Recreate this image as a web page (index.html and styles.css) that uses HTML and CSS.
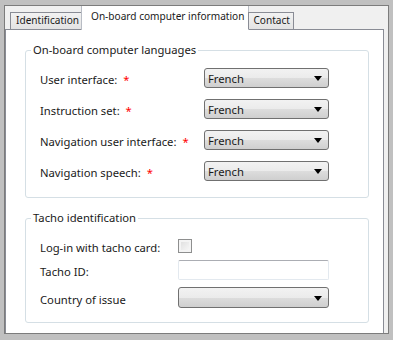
FILE: index.html
```html
<!DOCTYPE html>
<html lang="en">
  <head>
    <meta charset="UTF-8" />
    <title>On-board computer information</title>
    <link rel="stylesheet" href="styles.css">
  </head>
  <body>
    <div class="window">
      <div class="frame">
        <div class="tab-bar">
          <div class="tab first">Identification</div>
          <div class="tab active">On-board computer information</div>
          <div class="tab last">Contact</div>
        </div>

        <div class="pane">
          <fieldset class="group languages-group">
            <legend>On-board computer languages</legend>
            <div class="form-grid languages">
              <div class="label">User interface: <span class="req">*</span></div>
              <div class="select"><span>French</span><i class="arrow"></i></div>

              <div class="label">Instruction set: <span class="req">*</span></div>
              <div class="select"><span>French</span><i class="arrow"></i></div>

              <div class="label">Navigation user interface: <span class="req">*</span></div>
              <div class="select"><span>French</span><i class="arrow"></i></div>

              <div class="label">Navigation speech: <span class="req">*</span></div>
              <div class="select"><span>French</span><i class="arrow"></i></div>
            </div>
          </fieldset>

          <fieldset class="group">
            <legend>Tacho identification</legend>
            <div class="form-grid tacho">
              <div class="label">Log-in with tacho card:</div>
              <div class="control"><span class="checkbox"></span></div>

              <div class="label">Tacho ID:</div>
              <div class="input"></div>

              <div class="label shifted">Country of issue</div>
              <div class="select shifted"><span></span><i class="arrow"></i></div>
            </div>
          </fieldset>
        </div>
      </div>
    </div>
  </body>
</html>
```

FILE: styles.css
```css
:root {
  --frame-gray: #c0c0c0;
  --frame-line: #7c7c7c;
  --panel-bg: #f0f0f0;
  --tab-border: #898c95;
  --group-border: #d5dfe5;
  --text-color: #1a1a1a;
  --select-border: #707070;
}

* {
  margin: 0;
  padding: 0;
  box-sizing: border-box;
}

body {
  font-family: "Noto Sans", "DejaVu Sans", sans-serif;
  font-size: 11.25px;
  color: var(--text-color);
  background-color: white;
}

.window {
  width: 393px;
  height: 340px;
  border-style: solid;
  border-color: var(--frame-gray);
  border-width: 5px 4px 6px 4px;
}

.frame {
  height: 100%;
  border: 1px solid var(--frame-line);
  background-color: var(--panel-bg);
  padding-right: 4px;
  display: flex;
  flex-direction: column;
}

/* Tabs */
.tab-bar {
  display: flex;
  align-items: flex-end;
  height: 23px;
  padding-left: 5px;
  position: relative;
  z-index: 1;
}

.tab {
  height: 17px;
  line-height: 15px;
  font-size: 10.1px;
  border: 1px solid var(--tab-border);
  border-bottom: none;
  background: linear-gradient(#f2f2f2, #e3e3e3);
  white-space: nowrap;
}

.tab.first {
  padding: 0 2px 0 5px;
}

.tab.last {
  padding: 0 3px 0 4px;
}

.tab.active {
  height: 24px;
  margin-bottom: -1px;
  line-height: 20px;
  padding: 0 4px 0 9px;
  background: white;
  border-color: #b8bcc4;
  border-top: none;
  margin-left: -1px;
  margin-right: -1px;
}

/* Page */
.pane {
  flex: 1;
  background-color: white;
  border: 1px solid var(--tab-border);
  border-bottom: none;
  padding: 12px 14px 0 19px;
}

.group {
  border: 1px solid var(--group-border);
  border-radius: 3px;
  padding: 0 0 14px 14px;
}

.languages-group {
  padding-bottom: 16px;
}

.group + .group {
  margin-top: 12px;
}

.group legend {
  margin-left: -9px;
  padding: 0 2px;
  line-height: 16px;
}

.form-grid {
  display: grid;
  align-items: center;
  padding-top: 10px;
}

.languages {
  grid-template-columns: 164px 125px;
  grid-auto-rows: 20px;
  row-gap: 11px;
}

.tacho {
  grid-template-columns: 138px 151px;
  grid-template-rows: 20px 20px auto;
  row-gap: 4px;
}

.label {
  padding-top: 3px;
  white-space: nowrap;
}

.req {
  color: #f00;
  margin-left: 3px;
}

.select {
  height: 20px;
  border: 1px solid var(--select-border);
  border-radius: 3px;
  background: linear-gradient(#f2f2f2 0%, #ebebeb 50%, #dddddd 51%, #cfcfcf 100%);
  display: flex;
  align-items: center;
  justify-content: space-between;
  padding: 0 6px 0 3px;
}

.arrow {
  width: 0;
  height: 0;
  border-left: 4.5px solid transparent;
  border-right: 4.5px solid transparent;
  border-top: 5px solid #000;
  margin-top: 1px;
}

.tacho .select {
  height: 21px;
}

.shifted {
  margin-top: 3px;
}

.control {
  display: flex;
  align-items: center;
}

.checkbox {
  width: 14px;
  height: 14px;
  border: 1px solid #8e8f8f;
  background: linear-gradient(135deg, #dcdcdc, #fbfbfb);
  box-shadow: inset 0 0 0 2px #f4f4f4;
}

.input {
  height: 20px;
  border: 1px solid #e3e9ef;
  border-top-color: #abadb3;
  border-radius: 2px;
  background-color: white;
}
```
